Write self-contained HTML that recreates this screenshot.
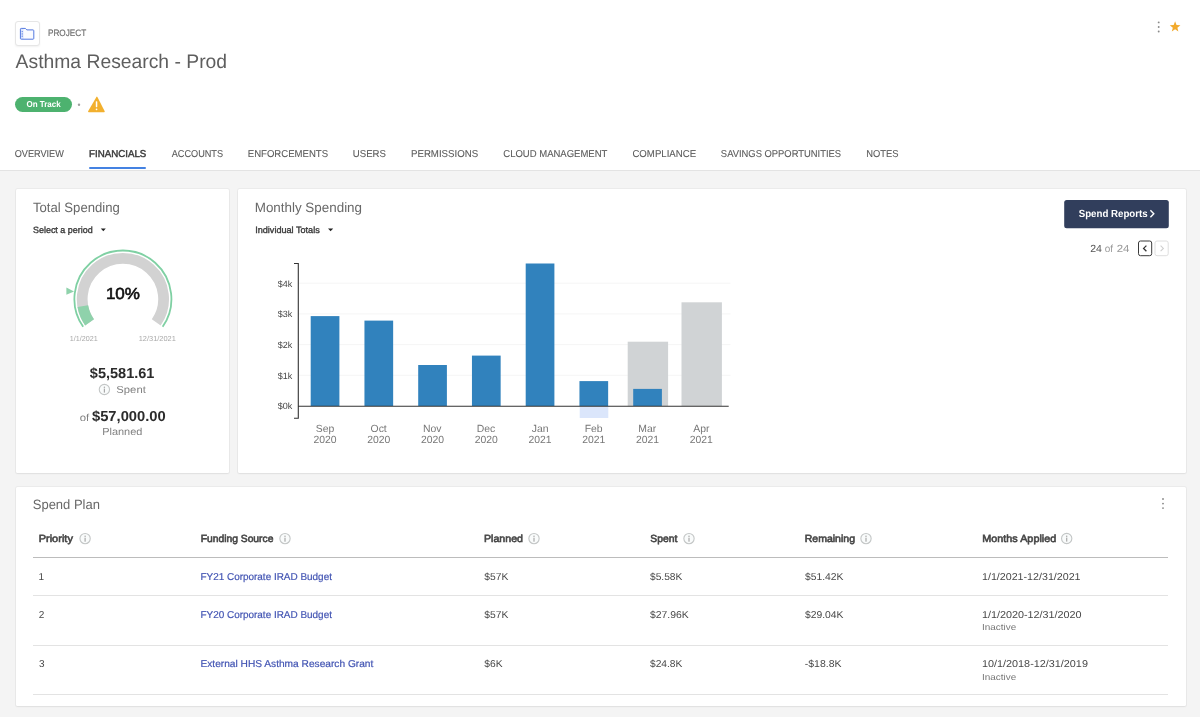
<!DOCTYPE html>
<html><head><meta charset="utf-8"><title>Asthma Research - Prod</title>
<style>
html,body{margin:0;padding:0}
body{width:1200px;height:717px;overflow:hidden;background:#f4f4f4;font-family:"Liberation Sans", sans-serif;position:relative}
.hdr{position:absolute;left:0;top:0;width:1200px;height:170px;background:#fff;border-bottom:1px solid #e3e3e3}
.card{position:absolute;background:#fff;border-radius:1.5px;box-shadow:0 0 0 1px rgba(0,0,0,.035),0 1px 2px rgba(0,0,0,.05)}
.ov{position:absolute;left:0;top:0;pointer-events:none;will-change:transform}
.ibox{position:absolute;left:15px;top:21px;width:23px;height:23px;border:1px solid #e6e6e6;border-radius:3px;background:#fff;box-shadow:0 1px 2px rgba(0,0,0,.06)}
.badge{position:absolute;left:14.8px;top:96.8px;width:57.4px;height:15.6px;border-radius:8px;background:#4db26f}
.ul{position:absolute;left:89.2px;top:167.4px;width:56.8px;height:2px;background:#4482e2;border-radius:1px}
.ln{position:absolute;left:33px;width:1135.4px}
</style></head><body>
<div class="hdr"></div>
<div class="ibox"></div>
<div class="badge"></div>
<div class="ul"></div>
<div class="card" style="left:16px;top:189px;width:213px;height:284px"></div>
<div class="card" style="left:238px;top:189px;width:948px;height:284px"></div>
<div class="card" style="left:16px;top:487px;width:1170px;height:219px"></div>
<div class="ln" style="top:557px;background:#bcbcbc;height:1.3px"></div><div class="ln" style="top:594.8px;background:#e3e3e3;height:1px"></div><div class="ln" style="top:644.5px;background:#e3e3e3;height:1px"></div><div class="ln" style="top:694.3px;background:#e3e3e3;height:1px"></div>
<svg class="ov" width="1200" height="717" viewBox="0 0 1200 717">
<!-- folder icon -->
<path d="M20.4,29.2 Q20.4,28.4 21.2,28.4 H25.4 L26.8,29.9 H33 Q33.8,29.9 33.8,30.7 V38.4 Q33.8,39.2 33,39.2 H21.2 Q20.4,39.2 20.4,38.4 Z" fill="#fafbff"/>
<path d="M20.4,29.2 Q20.4,28.4 21.2,28.4 H23.5 V39.2 H21.2 Q20.4,39.2 20.4,38.4 Z" fill="#dde6fc"/>
<path d="M20.4,29.2 Q20.4,28.4 21.2,28.4 H25.4 L26.8,29.9 H33 Q33.8,29.9 33.8,30.7 V38.4 Q33.8,39.2 33,39.2 H21.2 Q20.4,39.2 20.4,38.4 Z" fill="none" stroke="#5479e0" stroke-width="1" stroke-linejoin="round"/>
<g fill="#4a70dc"><circle cx="22.2" cy="31.6" r="0.6"/><circle cx="22.2" cy="33.9" r="0.6"/><circle cx="22.2" cy="36.2" r="0.6"/></g>
<!-- dot + warning -->
<circle cx="79" cy="104.7" r="1.2" fill="#a0a0a0"/>
<path d="M96.4,96.9 Q96.9,96.2 97.4,96.9 L104.7,111.2 Q105,112.2 104,112.2 H88.8 Q87.8,112.2 88.1,111.2 Z" fill="#f2b02e"/>
<rect x="95.8" y="101.2" width="1.5" height="6" rx="0.6" fill="#fff"/>
<circle cx="96.55" cy="109.3" r="0.85" fill="#fff"/>
<circle cx="1158.7" cy="22.4" r="0.95" fill="#8a8a8a"/><circle cx="1158.7" cy="27" r="0.95" fill="#8a8a8a"/><circle cx="1158.7" cy="31.5" r="0.95" fill="#8a8a8a"/>
<polygon points="1175.10,21.30 1176.51,24.96 1180.43,25.17 1177.38,27.64 1178.39,31.43 1175.10,29.30 1171.81,31.43 1172.82,27.64 1169.77,25.17 1173.69,24.96" fill="#f2aa2c"/>
<!-- carets -->
<path d="M100.8,228.5 H105.8 L103.3,231.2 Z" fill="#222"/>
<path d="M328,228.5 H333.2 L330.6,231.2 Z" fill="#222"/>

<path d="M83.17,326.82 A48.5,48.5 0 1 1 162.63,326.82" fill="none" stroke="#7fd0a3" stroke-width="1.8"/>
<path d="M89.56,322.34 A40.7,40.7 0 1 1 156.24,322.34" fill="none" stroke="#d2d2d2" stroke-width="10.8"/>
<path d="M89.56,322.34 A40.7,40.7 0 0 1 82.82,306.07" fill="none" stroke="#8fd2ab" stroke-width="10.8"/>
<path d="M66.4,287.4 L66.4,294.8 L74,291.6 Z" fill="#8fd2ab"/>

<line x1="299" x2="730.5" y1="375.30" y2="375.30" stroke="#f5f5f5" stroke-width="1"/><line x1="299" x2="730.5" y1="344.60" y2="344.60" stroke="#f5f5f5" stroke-width="1"/><line x1="299" x2="730.5" y1="313.90" y2="313.90" stroke="#f5f5f5" stroke-width="1"/><line x1="299" x2="730.5" y1="283.20" y2="283.20" stroke="#f5f5f5" stroke-width="1"/><rect x="627.70" y="341.70" width="40.40" height="64.30" fill="#d0d3d5"/><rect x="681.50" y="302.30" width="40.40" height="103.70" fill="#d0d3d5"/><rect x="579.70" y="406.00" width="28.60" height="12.00" fill="#dbe6fb"/><rect x="310.70" y="316.10" width="28.70" height="89.90" fill="#3182bd"/><rect x="364.45" y="320.60" width="28.70" height="85.40" fill="#3182bd"/><rect x="418.20" y="365.00" width="28.70" height="41.00" fill="#3182bd"/><rect x="471.95" y="355.60" width="28.70" height="50.40" fill="#3182bd"/><rect x="525.70" y="263.50" width="28.70" height="142.50" fill="#3182bd"/><rect x="579.45" y="381.10" width="28.70" height="24.90" fill="#3182bd"/><rect x="633.20" y="388.90" width="28.70" height="17.10" fill="#3182bd"/><path d="M294,263.5 H298.3 V418.3 H294" fill="none" stroke="#333" stroke-width="1.1"/><line x1="298" x2="728.7" y1="406.2" y2="406.2" stroke="#333" stroke-width="1.1"/>
<circle cx="104.4" cy="389.5" r="5.15" fill="#f9fbfb" stroke="#c3c6c6" stroke-width="1.1"/><circle cx="104.4" cy="387.2" r="0.75" fill="#a9a9a9"/><rect x="103.80000000000001" y="388.6" width="1.2" height="4" fill="#a9a9a9"/><circle cx="85.1" cy="538.6" r="5.15" fill="#f9fbfb" stroke="#c3c6c6" stroke-width="1.1"/><circle cx="85.1" cy="536.3000000000001" r="0.75" fill="#a9a9a9"/><rect x="84.5" y="537.7" width="1.2" height="4" fill="#a9a9a9"/><circle cx="285" cy="538.6" r="5.15" fill="#f9fbfb" stroke="#c3c6c6" stroke-width="1.1"/><circle cx="285" cy="536.3000000000001" r="0.75" fill="#a9a9a9"/><rect x="284.4" y="537.7" width="1.2" height="4" fill="#a9a9a9"/><circle cx="534" cy="538.6" r="5.15" fill="#f9fbfb" stroke="#c3c6c6" stroke-width="1.1"/><circle cx="534" cy="536.3000000000001" r="0.75" fill="#a9a9a9"/><rect x="533.4" y="537.7" width="1.2" height="4" fill="#a9a9a9"/><circle cx="689" cy="538.6" r="5.15" fill="#f9fbfb" stroke="#c3c6c6" stroke-width="1.1"/><circle cx="689" cy="536.3000000000001" r="0.75" fill="#a9a9a9"/><rect x="688.4" y="537.7" width="1.2" height="4" fill="#a9a9a9"/><circle cx="866" cy="538.6" r="5.15" fill="#f9fbfb" stroke="#c3c6c6" stroke-width="1.1"/><circle cx="866" cy="536.3000000000001" r="0.75" fill="#a9a9a9"/><rect x="865.4" y="537.7" width="1.2" height="4" fill="#a9a9a9"/><circle cx="1066.7" cy="538.5" r="5.15" fill="#f9fbfb" stroke="#c3c6c6" stroke-width="1.1"/><circle cx="1066.7" cy="536.2" r="0.75" fill="#a9a9a9"/><rect x="1066.1000000000001" y="537.6" width="1.2" height="4" fill="#a9a9a9"/>
<circle cx="1163" cy="499" r="0.95" fill="#8a8a8a"/><circle cx="1163" cy="503.6" r="0.95" fill="#8a8a8a"/><circle cx="1163" cy="508.1" r="0.95" fill="#8a8a8a"/>
<rect x="1064.2" y="200" width="104.6" height="28.3" rx="2.5" fill="#313e5c"/>
<!-- pager -->
<rect x="1138.5" y="241" width="13.2" height="14.7" rx="2" fill="#fff" stroke="#3a3a3a" stroke-width="1"/>
<rect x="1155" y="241" width="13.2" height="14.7" rx="2" fill="#fff" stroke="#dedede" stroke-width="1"/>
<!-- button chevron -->
<path d="M1150.4,210.3 L1153.8,213.8 L1150.4,217.3" fill="none" stroke="#fff" stroke-width="1.4"/>
<path d="M1146.4,245.6 L1143.6,248.4 L1146.4,251.2" fill="none" stroke="#333" stroke-width="1.3"/>
<path d="M1160.6,245.6 L1163.4,248.4 L1160.6,251.2" fill="none" stroke="#cfcfcf" stroke-width="1.1"/>
<g font-family="Liberation Sans, sans-serif" text-rendering="geometricPrecision"><text transform="translate(47.96 36) scale(0.8795 1)" font-size="9.3" fill="#707070" stroke="#707070" stroke-width="0.2">PROJECT</text><text transform="translate(15.60 68) scale(0.9857 1)" font-size="19.6" fill="#5e5e5e">Asthma Research - Prod</text><text transform="translate(26.47 107) scale(0.9315 1)" font-size="8.6" font-weight="700" fill="#ffffff">On Track</text><text transform="translate(14.77 157) scale(0.9121 1)" font-size="10" fill="#5a5a5a" stroke="#5a5a5a" stroke-width="0.1">OVERVIEW</text><text transform="translate(89.12 157) scale(0.9700 1)" font-size="10" fill="#3a3a3a" stroke="#3a3a3a" stroke-width="0.45">FINANCIALS</text><text transform="translate(171.70 157) scale(0.9148 1)" font-size="10" fill="#5a5a5a" stroke="#5a5a5a" stroke-width="0.1">ACCOUNTS</text><text transform="translate(247.78 157) scale(0.9571 1)" font-size="10" fill="#5a5a5a" stroke="#5a5a5a" stroke-width="0.1">ENFORCEMENTS</text><text transform="translate(352.78 157) scale(0.9612 1)" font-size="10" fill="#5a5a5a" stroke="#5a5a5a" stroke-width="0.1">USERS</text><text transform="translate(410.97 157) scale(0.9679 1)" font-size="10" fill="#5a5a5a" stroke="#5a5a5a" stroke-width="0.1">PERMISSIONS</text><text transform="translate(503.32 157) scale(0.9508 1)" font-size="10" fill="#5a5a5a" stroke="#5a5a5a" stroke-width="0.1">CLOUD MANAGEMENT</text><text transform="translate(632.42 157) scale(0.9625 1)" font-size="10" fill="#5a5a5a" stroke="#5a5a5a" stroke-width="0.1">COMPLIANCE</text><text transform="translate(720.87 157) scale(0.9388 1)" font-size="10" fill="#5a5a5a" stroke="#5a5a5a" stroke-width="0.1">SAVINGS OPPORTUNITIES</text><text transform="translate(866.20 157) scale(0.9353 1)" font-size="10" fill="#5a5a5a" stroke="#5a5a5a" stroke-width="0.1">NOTES</text><text transform="translate(32.96 212) scale(0.9722 1)" font-size="13.5" fill="#686868">Total Spending</text><text transform="translate(32.95 233) scale(0.9850 1)" font-size="9.1" fill="#3a3a3a" stroke="#3a3a3a" stroke-width="0.35">Select a period</text><text transform="translate(105.90 299) scale(1.0645 1)" font-size="16" fill="#111" stroke="#111" stroke-width="0.6">10%</text><text transform="translate(69.71 341) scale(0.9838 1)" font-size="7.3" fill="#aaa">1/1/2021</text><text transform="translate(138.69 341) scale(1.0182 1)" font-size="7.3" fill="#aaa">12/31/2021</text><text transform="translate(89.85 378)" font-size="14.5" font-weight="700" fill="#2b2b2b">$5,581.61</text><text transform="translate(116.35 393) scale(1.1048 1)" font-size="10.2" fill="#808080">Spent</text><text transform="translate(79.72 421) scale(1.1152 1)" font-size="10.2" fill="#808080">of</text><text transform="translate(91.95 421) scale(1.0174 1)" font-size="14.5" font-weight="700" fill="#2b2b2b">$57,000.00</text><text transform="translate(102.19 435) scale(1.0750 1)" font-size="10.2" fill="#808080">Planned</text><text transform="translate(254.71 212) scale(0.9929 1)" font-size="13.5" fill="#686868">Monthly Spending</text><text transform="translate(255.20 233)" font-size="9.1" fill="#3a3a3a" stroke="#3a3a3a" stroke-width="0.35">Individual Totals</text><text transform="translate(1078.66 217) scale(0.9421 1)" font-size="10.3" font-weight="700" fill="#fff">Spend Reports</text><text transform="translate(1090.19 252) scale(1.0233 1)" font-size="10.3" fill="#555">24</text><text transform="translate(1104.72 252) scale(0.9697 1)" font-size="10.3" fill="#999">of</text><text transform="translate(1116.64 252) scale(1.1163 1)" font-size="10.3" fill="#999">24</text><text transform="translate(277.80 287)" font-size="9" fill="#444">$4k</text><text transform="translate(277.80 317)" font-size="9" fill="#444">$3k</text><text transform="translate(277.80 348)" font-size="9" fill="#444">$2k</text><text transform="translate(277.80 379)" font-size="9" fill="#444">$1k</text><text transform="translate(277.80 409)" font-size="9" fill="#444">$0k</text><text transform="translate(315.80 432)" font-size="10.4" fill="#777">Sep</text><text transform="translate(313.43 443)" font-size="10.4" fill="#777">2020</text><text transform="translate(370.55 432)" font-size="10.4" fill="#777">Oct</text><text transform="translate(367.18 443)" font-size="10.4" fill="#777">2020</text><text transform="translate(422.93 432)" font-size="10.4" fill="#777">Nov</text><text transform="translate(420.93 443)" font-size="10.4" fill="#777">2020</text><text transform="translate(476.80 432)" font-size="10.4" fill="#777">Dec</text><text transform="translate(474.68 443)" font-size="10.4" fill="#777">2020</text><text transform="translate(531.80 432)" font-size="10.4" fill="#777">Jan</text><text transform="translate(528.42 443)" font-size="10.4" fill="#777">2021</text><text transform="translate(584.67 432)" font-size="10.4" fill="#777">Feb</text><text transform="translate(582.17 443)" font-size="10.4" fill="#777">2021</text><text transform="translate(638.30 432)" font-size="10.4" fill="#777">Mar</text><text transform="translate(635.92 443)" font-size="10.4" fill="#777">2021</text><text transform="translate(693.30 432)" font-size="10.4" fill="#777">Apr</text><text transform="translate(689.67 443)" font-size="10.4" fill="#777">2021</text><text transform="translate(32.72 509) scale(0.9635 1)" font-size="13.5" fill="#686868">Spend Plan</text><text transform="translate(38.67 542) scale(1.0688 1)" font-size="10.3" fill="#464646" stroke="#464646" stroke-width="0.6">Priority</text><text transform="translate(200.70 542)" font-size="10.3" fill="#464646" stroke="#464646" stroke-width="0.6">Funding Source</text><text transform="translate(483.98 542) scale(1.0324 1)" font-size="10.3" fill="#464646" stroke="#464646" stroke-width="0.6">Planned</text><text transform="translate(650.20 542) scale(1.0092 1)" font-size="10.3" fill="#464646" stroke="#464646" stroke-width="0.6">Spent</text><text transform="translate(804.69 542) scale(1.0227 1)" font-size="10.3" fill="#464646" stroke="#464646" stroke-width="0.6">Remaining</text><text transform="translate(982.27 542) scale(1.0504 1)" font-size="10.3" fill="#464646" stroke="#464646" stroke-width="0.6">Months Applied</text><text transform="translate(38.55 580)" font-size="10" fill="#484848">1</text><text transform="translate(200.45 580) scale(0.9939 1)" font-size="10" fill="#4355b3" stroke="#4355b3" stroke-width="0.2">FY21 Corporate IRAD Budget</text><text transform="translate(484.24 580) scale(1.0304 1)" font-size="10" fill="#484848">$57K</text><text transform="translate(649.94 580) scale(1.0240 1)" font-size="10" fill="#484848">$5.58K</text><text transform="translate(804.94 580) scale(1.0340 1)" font-size="10" fill="#484848">$51.42K</text><text transform="translate(982.00 580) scale(1.0674 1)" font-size="10" fill="#484848">1/1/2021-12/31/2021</text><text transform="translate(38.80 618)" font-size="10" fill="#484848">2</text><text transform="translate(200.45 618) scale(0.9939 1)" font-size="10" fill="#4355b3" stroke="#4355b3" stroke-width="0.2">FY20 Corporate IRAD Budget</text><text transform="translate(484.24 618) scale(1.0304 1)" font-size="10" fill="#484848">$57K</text><text transform="translate(649.94 618) scale(1.0422 1)" font-size="10" fill="#484848">$27.96K</text><text transform="translate(804.94 618) scale(1.0340 1)" font-size="10" fill="#484848">$29.04K</text><text transform="translate(981.99 618) scale(1.0784 1)" font-size="10" fill="#484848">1/1/2020-12/31/2020</text><text transform="translate(39.05 667)" font-size="10" fill="#484848">3</text><text transform="translate(200.44 667) scale(1.0165 1)" font-size="10" fill="#4355b3" stroke="#4355b3" stroke-width="0.2">External HHS Asthma Research Grant</text><text transform="translate(484.24 667) scale(1.0286 1)" font-size="10" fill="#484848">$6K</text><text transform="translate(649.94 667) scale(1.0240 1)" font-size="10" fill="#484848">$24.8K</text><text transform="translate(804.67 667) scale(1.0522 1)" font-size="10" fill="#484848">-$18.8K</text><text transform="translate(981.99 667) scale(1.0822 1)" font-size="10" fill="#484848">10/1/2018-12/31/2019</text><text transform="translate(981.95 630) scale(1.1316 1)" font-size="8.8" fill="#777">Inactive</text><text transform="translate(981.95 680) scale(1.1316 1)" font-size="8.8" fill="#777">Inactive</text></g>
</svg>
</body></html>
